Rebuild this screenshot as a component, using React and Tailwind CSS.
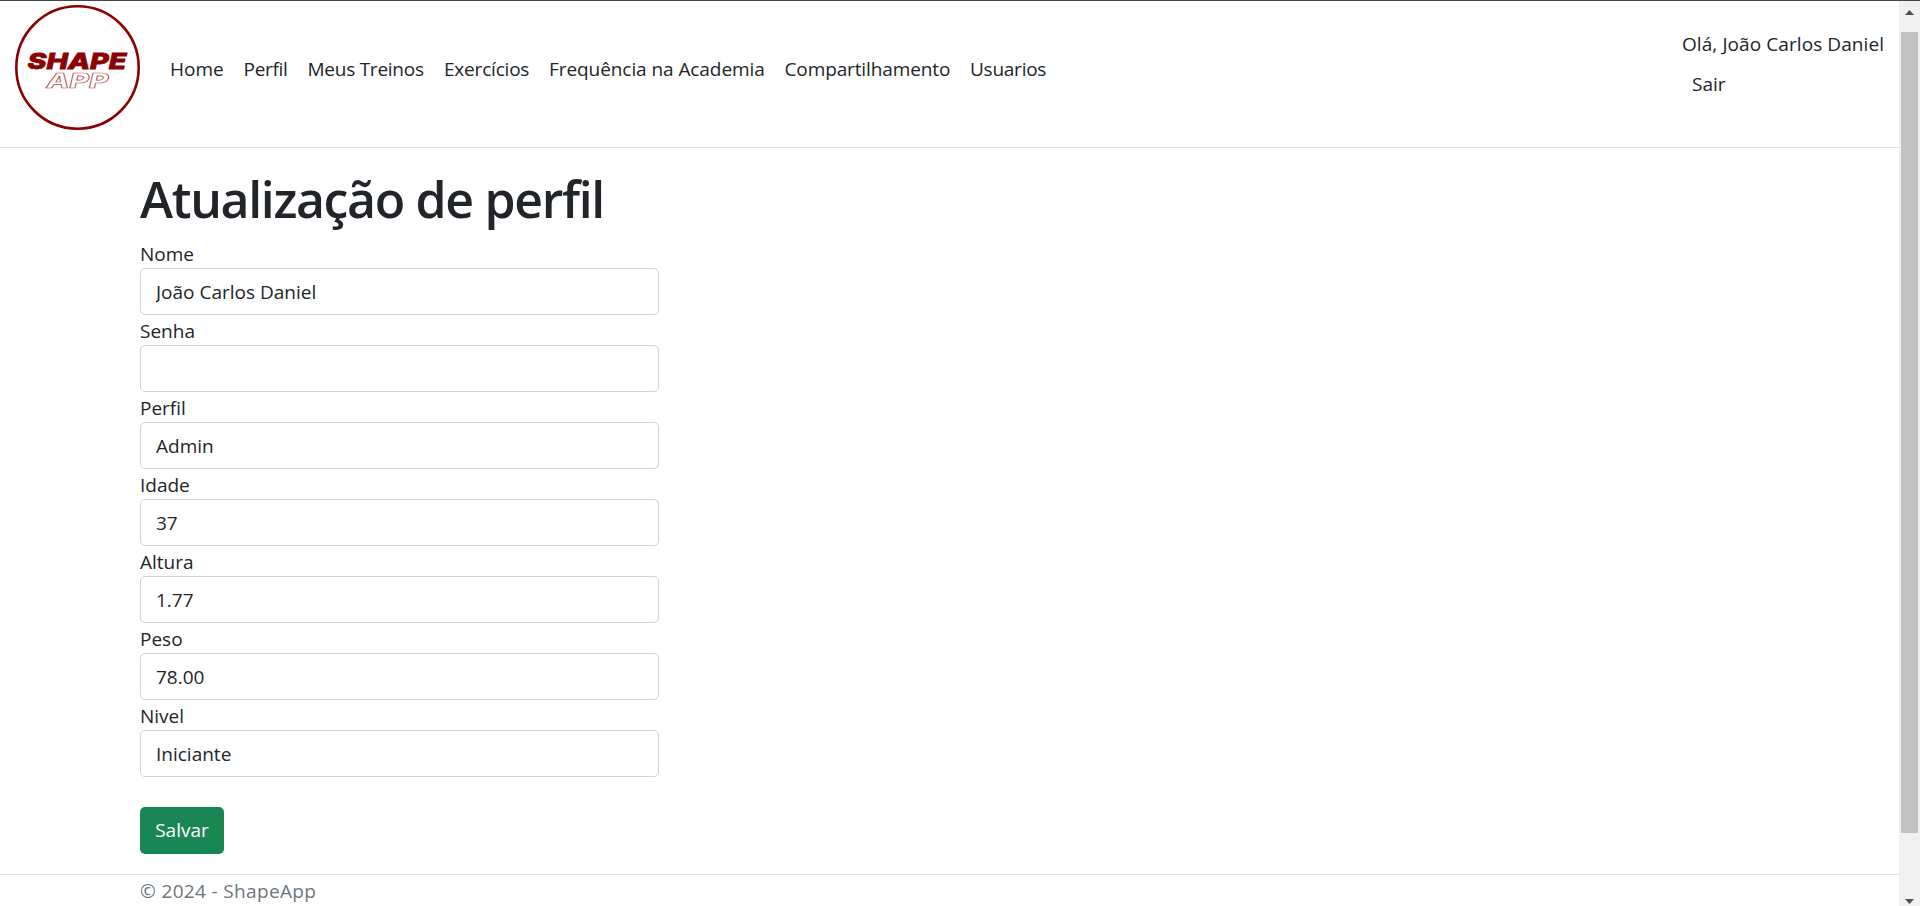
const navItems = [
  { label: 'Home', box: 'w-[73.5px]' },
  { label: 'Perfil', box: 'w-[64px] tracking-[-0.3px]' },
  { label: 'Meus Treinos', box: 'w-[136.5px] tracking-[-0.25px]' },
  { label: 'Exercícios', box: 'w-[105px] tracking-[-0.2px]' },
  { label: 'Frequência na Academia', box: 'w-[235.5px] tracking-[-0.07px]' },
  { label: 'Compartilhamento', box: 'w-[185.5px] tracking-[-0.12px]' },
  { label: 'Usuarios', box: 'w-[96px] tracking-[-0.25px]' },
];

const fields = [
  { label: 'Nome', value: 'João Carlos Daniel' },
  { label: 'Senha', value: '' },
  { label: 'Perfil', value: 'Admin' },
  { label: 'Idade', value: '37' },
  { label: 'Altura', value: '1.77' },
  { label: 'Peso', value: '78.00' },
  { label: 'Nivel', value: 'Iniciante' },
];

function Logo() {
  return (
    <svg width="125" height="125" viewBox="0 0 125 125" className="shrink-0" role="img" aria-label="Shape App">
      <circle cx="62.5" cy="62.5" r="61.2" fill="none" stroke="#8b0000" strokeWidth="2.6" />
      <g fontFamily="Inter, sans-serif" fontStyle="italic">
        <text x="12.5" y="64" fontSize="22" fontWeight="800" textLength="99" lengthAdjust="spacingAndGlyphs" fill="#8b0000" stroke="#8b0000" strokeWidth="0.8">
          SHAPE
        </text>
        <text x="31.5" y="83.3" fontSize="20.5" fontWeight="800" textLength="62" lengthAdjust="spacingAndGlyphs" fill="#fff" stroke="#b04a4a" strokeWidth="0.7">
          APP
        </text>
      </g>
    </svg>
  );
}

function Header() {
  return (
    <header className="flex h-[147px] shrink-0 items-start border-b border-[#dee2e6] pl-[15px] pt-1">
      <Logo />
      <nav className="ml-5 mt-[44px] flex">
        {navItems.map((item) => (
          <a key={item.label} href="#" className={`${item.box} whitespace-nowrap pl-[10px] leading-[40px]`}>
            {item.label}
          </a>
        ))}
      </nav>
      <div className="ml-auto mt-[19px] w-[217px] whitespace-nowrap leading-[40px]">
        <div className="tracking-[0.08px]">Olá, João Carlos Daniel</div>
        <a href="#" className="block pl-[10px]">Sair</a>
      </div>
    </header>
  );
}

function Scrollbar() {
  return (
    <div className="flex w-[21px] shrink-0 flex-col items-center bg-[#f0f0f0]">
      <svg width="21" height="31" viewBox="0 0 21 31">
        <path d="M6 14 10.5 9 15 14Z" fill="#505050" />
      </svg>
      <div className="h-[801px] w-[17px] bg-[#c1c1c1]" />
      <svg width="21" height="73" viewBox="0 0 21 73" className="shrink-0">
        <path d="M6 66H15L10.5 71Z" fill="#505050" />
      </svg>
    </div>
  );
}

export default function App() {
  return (
    <div className="flex h-[906px] overflow-hidden border-t border-[#444] bg-white font-['Open_Sans','Noto_Sans',sans-serif] text-[19px] text-[#212529]">
      <div className="flex min-w-0 flex-1 flex-col">
        <Header />
        <main className="flex-1 pl-[140px]">
          <h1 className="mt-[22px] text-[50px] font-semibold leading-[58px] tracking-[-1.35px]">Atualização de perfil</h1>
          <form className="mt-[10px] w-[519px]">
            {fields.map((field) => (
              <label key={field.label} className="block">
                <span className="block h-[30px] leading-[32px]">{field.label}</span>
                <input
                  type="text"
                  defaultValue={field.value}
                  className="block h-[47px] w-full rounded-[5px] border border-[#ced4da] px-[15px] leading-[30px] outline-none"
                />
              </label>
            ))}
            <button type="button" className="mt-[30px] block h-[47px] w-[84px] rounded-[5px] bg-[#198754] leading-[47px] text-white">
              Salvar
            </button>
          </form>
        </main>
        <footer className="h-[32px] shrink-0 border-t border-[#dee2e6] pl-[140px] leading-[32px] tracking-[0.35px] text-[#6c757d]">
          © 2024 - ShapeApp
        </footer>
      </div>
      <Scrollbar />
    </div>
  );
}
